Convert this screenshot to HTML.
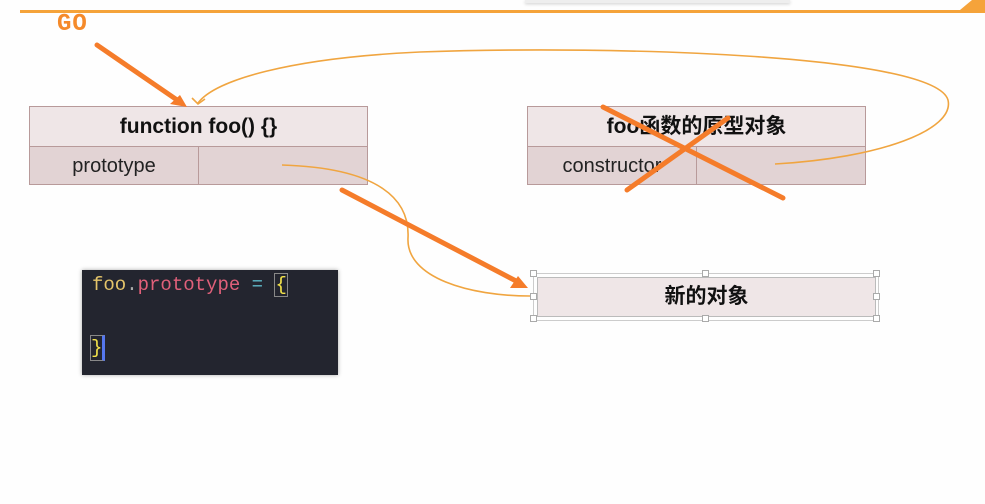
<!DOCTYPE html>
<html><head><meta charset="utf-8"><style>
body{margin:0;width:985px;height:504px;background:#fefefe;position:relative;overflow:hidden;font-family:"Liberation Sans","Noto Sans CJK SC",sans-serif}
.a{position:absolute;box-sizing:border-box}
.box{border:1.5px solid #b89a9a;background:#efe6e7}
.hd{font-weight:bold;font-size:21px;text-align:center;color:#111;line-height:40px;border-bottom:1.5px solid #b89a9a;height:39px}
.row{display:flex;height:37px;background:#e2d3d4}
.row div{flex:1;font-size:20px;text-align:center;line-height:38px;color:#222}
.row div:first-child{border-right:1.5px solid #b89a9a}
.code{font-family:"Liberation Mono",monospace;font-size:19px}
.h{position:absolute;width:7px;height:7px;background:#fff;border:1px solid #aaa;box-sizing:border-box}
</style></head><body>
<div class="a" style="left:525px;top:0;width:265px;height:3px;background:#eee;box-shadow:0 1px 3px #ccc"></div>
<div class="a" style="left:20px;top:10px;width:965px;height:3px;background:#f5a33a"></div>
<div class="a" style="left:57px;top:11px;font-family:'Liberation Mono',monospace;font-weight:bold;font-size:24px;color:#f58a2a;letter-spacing:1px">GO</div>
<div class="a box" style="left:29px;top:106px;width:339px;height:79px"><div class="hd">function foo() {}</div><div class="row"><div>prototype</div><div></div></div></div>
<div class="a box" style="left:527px;top:106px;width:339px;height:79px"><div class="hd">foo函数的原型对象</div><div class="row"><div>constructor</div><div></div></div></div>
<div class="a" style="left:82px;top:270px;width:256px;height:105px;background:#23252f;box-shadow:0 0 4px #aaa"></div>
<div class="a code" style="left:92px;top:274px;color:#e4c46a">foo<span style="color:#aaa">.</span><span style="color:#e0607a">prototype</span> <span style="color:#5fb8c8">=</span> <span style="color:#f2e24a;border:1px solid #888">{</span></div>
<div class="a code" style="left:90px;top:335px;color:#f2e24a;border:1px solid #888;border-right:3px solid #5577ee;line-height:24px">}</div>
<div class="a" style="left:537px;top:277px;width:339px;height:40px;background:#efe6e7;border:1px solid #bbb;text-align:center;font-weight:bold;font-size:21px;line-height:38px;color:#111">新的对象</div>
<div class="a" style="left:533px;top:273px;width:346px;height:48px;border:1px solid #ccc"></div>
<div class="h" style="left:530px;top:270px"></div><div class="h" style="left:702px;top:270px"></div><div class="h" style="left:873px;top:270px"></div>
<div class="h" style="left:530px;top:293px"></div><div class="h" style="left:873px;top:293px"></div>
<div class="h" style="left:530px;top:315px"></div><div class="h" style="left:702px;top:315px"></div><div class="h" style="left:873px;top:315px"></div>
<svg class="a" style="left:0;top:0" width="985" height="504">
<polygon points="960,10 985,10 985,0 972,0" fill="#f5a33a"/>
<g fill="none" stroke="#f0a540" stroke-width="1.6">
<path d="M775,164 C880,158 955,130 948,100 C935,55 620,45 420,52 C290,58 215,80 198,103"/>
<path d="M192,98 L198,104 L205,99"/>
<path d="M282,165 C380,168 410,200 408,238 C406,278 470,296 530,296"/>
</g>
<g stroke="#f57c2a" stroke-width="5" stroke-linecap="round" fill="none">
<line x1="97" y1="45" x2="180" y2="102"/>
<line x1="342" y1="190" x2="518" y2="282"/>
<line x1="603" y1="107" x2="783" y2="198"/>
<line x1="627" y1="190" x2="728" y2="118"/>
</g>
<polygon points="187,107 170,104 180,95" fill="#f57c2a"/>
<polygon points="528,288 510,288 518,276" fill="#f57c2a"/>
</svg>
</body></html>
